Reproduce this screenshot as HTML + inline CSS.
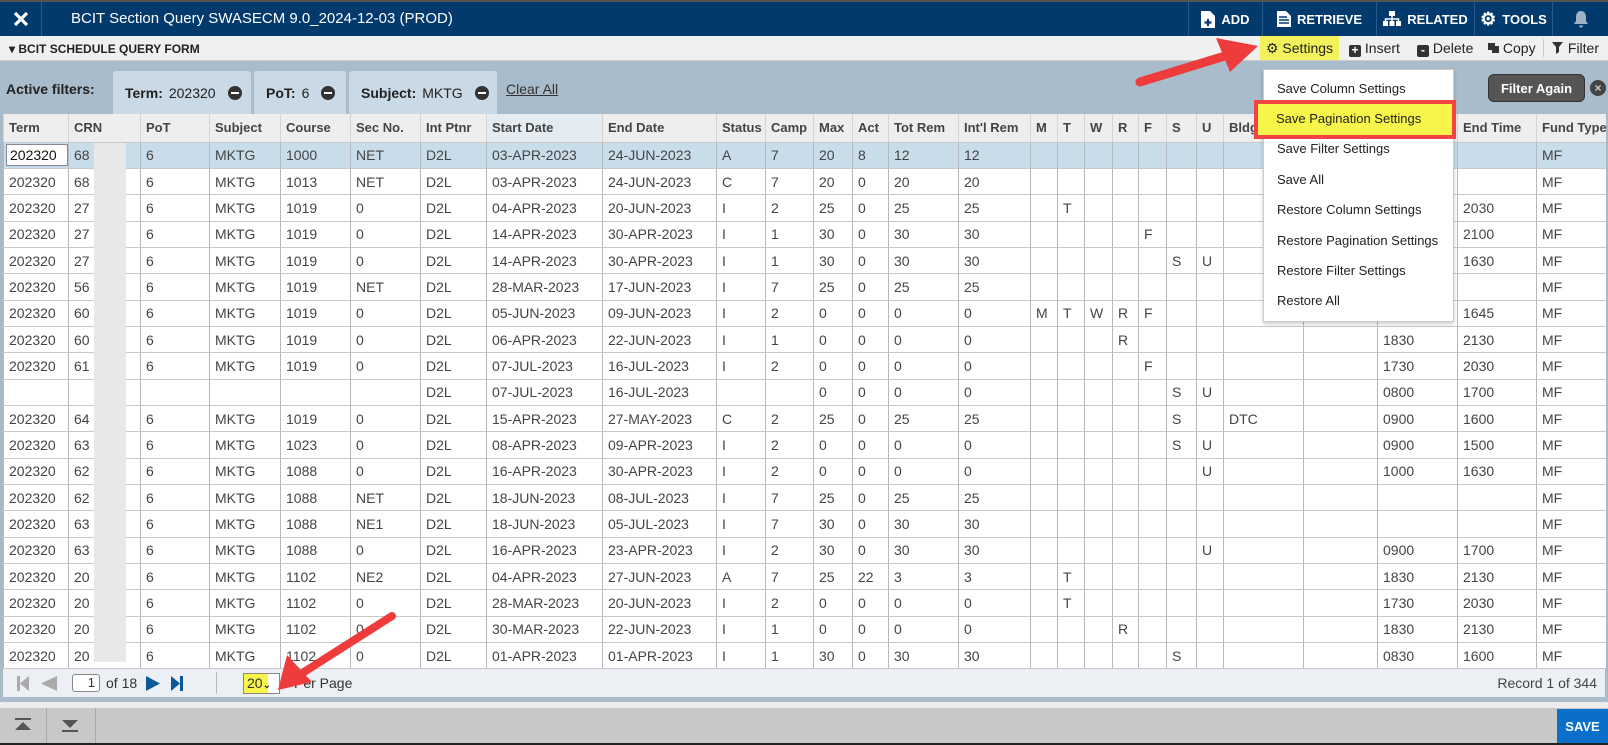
<!DOCTYPE html>
<html><head><meta charset="utf-8"><style>
*{box-sizing:border-box;margin:0;padding:0}
body{width:1608px;height:745px;overflow:hidden;background:#a9b9c6;font-family:"Liberation Sans",Arial,sans-serif;position:relative;color:#333}
.abs{position:absolute}
#top{left:0;top:0;width:1608px;height:36px;background:#023a6e;border-top:2px solid #555}
#top .t{color:#fff;font-size:15px}
.tb{position:absolute;top:0;height:34px;border-left:1px solid #2a5a8a;color:#fff;font-size:13px;font-weight:bold;display:flex;align-items:center;justify-content:center;gap:6px}
#sub{left:0;top:36px;width:1608px;height:25px;background:#f0f0f0;border-bottom:1px solid #ccc}
#filt{left:0;top:61px;width:1608px;height:53px;background:#a9bccb}
.chip{position:absolute;top:71px;height:43px;background:#c9d9e5;border-radius:3px 3px 0 0;font-size:14px;color:#222;display:flex;align-items:center;padding-left:12px}
.chip b{margin-right:6px}
.mn{display:inline-block;width:14px;height:14px;border-radius:50%;background:#333;position:relative;margin-left:12px}
.mn:after{content:"";position:absolute;left:3px;top:6px;width:8px;height:2px;background:#fff}
table{position:absolute;left:3px;top:114px;border-collapse:collapse;table-layout:fixed;width:1602px;font-size:14px}
td,th{height:26.35px;padding:0 0 0 5px;white-space:nowrap;overflow:hidden;text-align:left;border-left:1px dotted #bbb;border-bottom:1px solid #c8c8c8}
th{height:28px;background:#eeeeee;font-weight:bold;font-size:13px;color:#444;border-left:1px solid #d4d4d4}
tbody tr{background:#fff}
tbody tr.sel{background:#c9dcea}
td{color:#444}
#pag{left:3px;top:669px;width:1602px;height:28px;background:#eceff3;font-size:14px}
#bot{left:0;top:708px;width:1608px;height:35px;background:#c8c8c8}
#dd{left:1263px;top:69px;width:191px;height:253px;background:#fff;border:1px solid #ccc;box-shadow:0 2px 4px rgba(0,0,0,.2);font-size:13px;color:#222}
#dd div{position:absolute;left:13px}
.tl{position:absolute;top:4px;font-size:14px;color:#222}
</style></head><body>

<div id="top" class="abs">
 <div class="abs" style="left:0;top:0;width:42px;height:34px;border-right:1px solid #2a5a8a;display:flex;align-items:center;justify-content:center"><svg width="16" height="16" viewBox="0 0 16 16"><path d="M2 2L14 14M14 2L2 14" stroke="#fff" stroke-width="3.2"/></svg></div>
 <div class="abs t" style="left:71px;top:8px">BCIT Section Query SWASECM 9.0_2024-12-03 (PROD)</div>
 <div class="tb" style="left:1188px;width:74px"><svg width="14" height="17" viewBox="0 0 14 17"><path d="M0 0H9L14 5V17H0Z" fill="#fff"/><path d="M7 8V15M3.5 11.5H10.5" stroke="#023a6e" stroke-width="2.2"/></svg>ADD</div>
 <div class="tb" style="left:1262px;width:114px"><svg width="14" height="16" viewBox="0 0 14 16"><path d="M0 0H9L14 5V16H0Z" fill="#fff"/><path d="M2 6H10M2 9H12M2 12H12" stroke="#023a6e" stroke-width="1.5"/></svg>RETRIEVE</div>
 <div class="tb" style="left:1376px;width:98px"><svg width="18" height="16" viewBox="0 0 18 16"><rect x="6" y="0" width="6" height="5" fill="#fff"/><rect x="0" y="10" width="5" height="5" fill="#fff"/><rect x="6.5" y="10" width="5" height="5" fill="#fff"/><rect x="13" y="10" width="5" height="5" fill="#fff"/><path d="M9 5V8M2.5 10V8H15.5V10M9 8V10" stroke="#fff" stroke-width="1.5" fill="none"/></svg>RELATED</div>
 <div class="tb" style="left:1474px;width:78px"><span style="font-size:18px">⚙</span>TOOLS</div>
 <div class="tb" style="left:1552px;width:56px"><svg width="16" height="18" viewBox="0 0 16 18"><path d="M8 1C4.5 1 3 4 3 7V11L1 14H15L13 11V7C13 4 11.5 1 8 1Z M6 15.5A2 2 0 0 0 10 15.5Z" fill="#9fb2c6"/></svg></div>
</div>

<div id="sub" class="abs">
 <div class="abs" style="left:9px;top:6px;font-size:12px;font-weight:bold;color:#222">▾ BCIT SCHEDULE QUERY FORM</div>
 <div class="abs" style="left:1260px;top:0;width:79px;height:24px;background:#f4f25a;font-size:14px;color:#222;display:flex;align-items:center;justify-content:center;gap:4px">⚙ Settings</div>
 <div class="tl" style="left:1349px"><span style="display:inline-block;width:12px;height:12px;background:#333;border-radius:2px;color:#fff;font-size:12px;line-height:11px;text-align:center;font-weight:bold;vertical-align:-1px">+</span> Insert</div>
 <div class="tl" style="left:1417px"><span style="display:inline-block;width:12px;height:12px;background:#333;border-radius:2px;color:#fff;font-size:12px;line-height:10px;text-align:center;font-weight:bold;vertical-align:-1px">-</span> Delete</div>
 <div class="tl" style="left:1488px"><span style="display:inline-block;width:11px;height:10px;background:linear-gradient(#333,#333) 0 0/7px 7px no-repeat,linear-gradient(#333,#333) 4px 3px/7px 7px no-repeat"></span> Copy</div>
 <div class="abs" style="left:1543px;top:3px;width:1px;height:18px;background:#ccc"></div>
 <div class="tl" style="left:1552px"><svg width="12" height="12" viewBox="0 0 12 12" style="vertical-align:-1px"><path d="M0 0H11L7 5V10L4 12V5Z" fill="#333"/></svg> Filter</div>
</div>

<div id="filt" class="abs"></div>
<div class="abs" style="left:6px;top:81px;font-size:14px;font-weight:bold;color:#222">Active filters:</div>
<div class="chip" style="left:113px;width:138px"><b>Term:</b>202320<span class="mn"></span></div>
<div class="chip" style="left:254px;width:92px"><b>PoT:</b>6<span class="mn"></span></div>
<div class="chip" style="left:349px;width:148px"><b>Subject:</b>MKTG<span class="mn"></span></div>
<div class="abs" style="left:506px;top:81px;font-size:14px;color:#333;text-decoration:underline">Clear All</div>
<div class="abs" style="left:1488px;top:74px;width:97px;height:28px;background:#555;border:1px solid #333;border-radius:6px;color:#fff;font-size:13px;font-weight:bold;display:flex;align-items:center;justify-content:center">Filter Again</div>
<div class="abs" style="left:1590px;top:80px;width:16px;height:16px;border-radius:50%;background:#444;color:#ccc;font-size:12px;font-weight:bold;line-height:16px;text-align:center">×</div>

<table>
<colgroup><col style="width:65px"><col style="width:72px"><col style="width:69px"><col style="width:71px"><col style="width:70px"><col style="width:70px"><col style="width:66px"><col style="width:116px"><col style="width:114px"><col style="width:49px"><col style="width:48px"><col style="width:39px"><col style="width:36px"><col style="width:70px"><col style="width:72px"><col style="width:27px"><col style="width:27px"><col style="width:28px"><col style="width:26px"><col style="width:28px"><col style="width:30px"><col style="width:27px"><col style="width:80px"><col style="width:74px"><col style="width:80px"><col style="width:79px"><col style="width:69px"></colgroup>
<thead><tr><th>Term</th><th>CRN</th><th>PoT</th><th>Subject</th><th>Course</th><th>Sec No.</th><th>Int Ptnr</th><th style="background:#e4ecf2">Start Date</th><th>End Date</th><th>Status</th><th>Camp</th><th>Max</th><th>Act</th><th>Tot Rem</th><th>Int'l Rem</th><th>M</th><th>T</th><th>W</th><th>R</th><th>F</th><th>S</th><th>U</th><th>Bldg</th><th>Room</th><th>Start Time</th><th>End Time</th><th>Fund Type</th></tr></thead>
<tbody>
<tr class="sel"><td style="padding:0 0 0 2px"><span style="display:block;background:#fff;border:1px solid #889;height:22px;line-height:20px;padding-left:3px;color:#111;width:62px">202320</span></td><td>68</td><td>6</td><td>MKTG</td><td>1000</td><td>NET</td><td>D2L</td><td>03-APR-2023</td><td>24-JUN-2023</td><td>A</td><td>7</td><td>20</td><td>8</td><td>12</td><td>12</td><td></td><td></td><td></td><td></td><td></td><td></td><td></td><td></td><td></td><td></td><td></td><td>MF</td></tr>
<tr><td>202320</td><td>68</td><td>6</td><td>MKTG</td><td>1013</td><td>NET</td><td>D2L</td><td>03-APR-2023</td><td>24-JUN-2023</td><td>C</td><td>7</td><td>20</td><td>0</td><td>20</td><td>20</td><td></td><td></td><td></td><td></td><td></td><td></td><td></td><td></td><td></td><td></td><td></td><td>MF</td></tr>
<tr><td>202320</td><td>27</td><td>6</td><td>MKTG</td><td>1019</td><td>0</td><td>D2L</td><td>04-APR-2023</td><td>20-JUN-2023</td><td>I</td><td>2</td><td>25</td><td>0</td><td>25</td><td>25</td><td></td><td>T</td><td></td><td></td><td></td><td></td><td></td><td></td><td></td><td></td><td>2030</td><td>MF</td></tr>
<tr><td>202320</td><td>27</td><td>6</td><td>MKTG</td><td>1019</td><td>0</td><td>D2L</td><td>14-APR-2023</td><td>30-APR-2023</td><td>I</td><td>1</td><td>30</td><td>0</td><td>30</td><td>30</td><td></td><td></td><td></td><td></td><td>F</td><td></td><td></td><td></td><td></td><td></td><td>2100</td><td>MF</td></tr>
<tr><td>202320</td><td>27</td><td>6</td><td>MKTG</td><td>1019</td><td>0</td><td>D2L</td><td>14-APR-2023</td><td>30-APR-2023</td><td>I</td><td>1</td><td>30</td><td>0</td><td>30</td><td>30</td><td></td><td></td><td></td><td></td><td></td><td>S</td><td>U</td><td></td><td></td><td></td><td>1630</td><td>MF</td></tr>
<tr><td>202320</td><td>56</td><td>6</td><td>MKTG</td><td>1019</td><td>NET</td><td>D2L</td><td>28-MAR-2023</td><td>17-JUN-2023</td><td>I</td><td>7</td><td>25</td><td>0</td><td>25</td><td>25</td><td></td><td></td><td></td><td></td><td></td><td></td><td></td><td></td><td></td><td></td><td></td><td>MF</td></tr>
<tr><td>202320</td><td>60</td><td>6</td><td>MKTG</td><td>1019</td><td>0</td><td>D2L</td><td>05-JUN-2023</td><td>09-JUN-2023</td><td>I</td><td>2</td><td>0</td><td>0</td><td>0</td><td>0</td><td>M</td><td>T</td><td>W</td><td>R</td><td>F</td><td></td><td></td><td></td><td></td><td></td><td>1645</td><td>MF</td></tr>
<tr><td>202320</td><td>60</td><td>6</td><td>MKTG</td><td>1019</td><td>0</td><td>D2L</td><td>06-APR-2023</td><td>22-JUN-2023</td><td>I</td><td>1</td><td>0</td><td>0</td><td>0</td><td>0</td><td></td><td></td><td></td><td>R</td><td></td><td></td><td></td><td></td><td></td><td>1830</td><td>2130</td><td>MF</td></tr>
<tr><td>202320</td><td>61</td><td>6</td><td>MKTG</td><td>1019</td><td>0</td><td>D2L</td><td>07-JUL-2023</td><td>16-JUL-2023</td><td>I</td><td>2</td><td>0</td><td>0</td><td>0</td><td>0</td><td></td><td></td><td></td><td></td><td>F</td><td></td><td></td><td></td><td></td><td>1730</td><td>2030</td><td>MF</td></tr>
<tr><td></td><td></td><td></td><td></td><td></td><td></td><td>D2L</td><td>07-JUL-2023</td><td>16-JUL-2023</td><td></td><td></td><td>0</td><td>0</td><td>0</td><td>0</td><td></td><td></td><td></td><td></td><td></td><td>S</td><td>U</td><td></td><td></td><td>0800</td><td>1700</td><td>MF</td></tr>
<tr><td>202320</td><td>64</td><td>6</td><td>MKTG</td><td>1019</td><td>0</td><td>D2L</td><td>15-APR-2023</td><td>27-MAY-2023</td><td>C</td><td>2</td><td>25</td><td>0</td><td>25</td><td>25</td><td></td><td></td><td></td><td></td><td></td><td>S</td><td></td><td>DTC</td><td></td><td>0900</td><td>1600</td><td>MF</td></tr>
<tr><td>202320</td><td>63</td><td>6</td><td>MKTG</td><td>1023</td><td>0</td><td>D2L</td><td>08-APR-2023</td><td>09-APR-2023</td><td>I</td><td>2</td><td>0</td><td>0</td><td>0</td><td>0</td><td></td><td></td><td></td><td></td><td></td><td>S</td><td>U</td><td></td><td></td><td>0900</td><td>1500</td><td>MF</td></tr>
<tr><td>202320</td><td>62</td><td>6</td><td>MKTG</td><td>1088</td><td>0</td><td>D2L</td><td>16-APR-2023</td><td>30-APR-2023</td><td>I</td><td>2</td><td>0</td><td>0</td><td>0</td><td>0</td><td></td><td></td><td></td><td></td><td></td><td></td><td>U</td><td></td><td></td><td>1000</td><td>1630</td><td>MF</td></tr>
<tr><td>202320</td><td>62</td><td>6</td><td>MKTG</td><td>1088</td><td>NET</td><td>D2L</td><td>18-JUN-2023</td><td>08-JUL-2023</td><td>I</td><td>7</td><td>25</td><td>0</td><td>25</td><td>25</td><td></td><td></td><td></td><td></td><td></td><td></td><td></td><td></td><td></td><td></td><td></td><td>MF</td></tr>
<tr><td>202320</td><td>63</td><td>6</td><td>MKTG</td><td>1088</td><td>NE1</td><td>D2L</td><td>18-JUN-2023</td><td>05-JUL-2023</td><td>I</td><td>7</td><td>30</td><td>0</td><td>30</td><td>30</td><td></td><td></td><td></td><td></td><td></td><td></td><td></td><td></td><td></td><td></td><td></td><td>MF</td></tr>
<tr><td>202320</td><td>63</td><td>6</td><td>MKTG</td><td>1088</td><td>0</td><td>D2L</td><td>16-APR-2023</td><td>23-APR-2023</td><td>I</td><td>2</td><td>30</td><td>0</td><td>30</td><td>30</td><td></td><td></td><td></td><td></td><td></td><td></td><td>U</td><td></td><td></td><td>0900</td><td>1700</td><td>MF</td></tr>
<tr><td>202320</td><td>20</td><td>6</td><td>MKTG</td><td>1102</td><td>NE2</td><td>D2L</td><td>04-APR-2023</td><td>27-JUN-2023</td><td>A</td><td>7</td><td>25</td><td>22</td><td>3</td><td>3</td><td></td><td>T</td><td></td><td></td><td></td><td></td><td></td><td></td><td></td><td>1830</td><td>2130</td><td>MF</td></tr>
<tr><td>202320</td><td>20</td><td>6</td><td>MKTG</td><td>1102</td><td>0</td><td>D2L</td><td>28-MAR-2023</td><td>20-JUN-2023</td><td>I</td><td>2</td><td>0</td><td>0</td><td>0</td><td>0</td><td></td><td>T</td><td></td><td></td><td></td><td></td><td></td><td></td><td></td><td>1730</td><td>2030</td><td>MF</td></tr>
<tr><td>202320</td><td>20</td><td>6</td><td>MKTG</td><td>1102</td><td>0</td><td>D2L</td><td>30-MAR-2023</td><td>22-JUN-2023</td><td>I</td><td>1</td><td>0</td><td>0</td><td>0</td><td>0</td><td></td><td></td><td></td><td>R</td><td></td><td></td><td></td><td></td><td></td><td>1830</td><td>2130</td><td>MF</td></tr>
<tr><td>202320</td><td>20</td><td>6</td><td>MKTG</td><td>1102</td><td>0</td><td>D2L</td><td>01-APR-2023</td><td>01-APR-2023</td><td>I</td><td>1</td><td>30</td><td>0</td><td>30</td><td>30</td><td></td><td></td><td></td><td></td><td></td><td>S</td><td></td><td></td><td></td><td>0830</td><td>1600</td><td>MF</td></tr>
</tbody></table>

<div class="abs" style="left:94px;top:143px;width:32px;height:519px;background:#e8e8e8"></div>

<div id="pag" class="abs">
 <svg class="abs" style="left:14px;top:7px" width="12" height="15" viewBox="0 0 12 15"><rect x="0" y="0" width="3" height="15" fill="#aaa"/><path d="M12 0V15L3 7.5Z" fill="#aaa"/></svg>
 <svg class="abs" style="left:38px;top:7px" width="16" height="15" viewBox="0 0 16 15"><path d="M16 0V15L0 7.5Z" fill="#aaa"/></svg>
 <div class="abs" style="left:69px;top:5px;width:28px;height:18px;border:1px solid #888;border-radius:3px;background:#fff;text-align:right;padding-right:4px;font-size:13px;line-height:16px">1</div>
 <div class="abs" style="left:103px;top:6px;font-size:14px">of 18</div>
 <svg class="abs" style="left:143px;top:7px" width="14" height="15" viewBox="0 0 14 15"><path d="M0 0V15L14 7.5Z" fill="#0a5a98"/></svg>
 <svg class="abs" style="left:168px;top:7px" width="12" height="15" viewBox="0 0 12 15"><path d="M0 0V15L9 7.5Z" fill="#0a5a98"/><rect x="9" y="0" width="3" height="15" fill="#0a5a98"/></svg>
 <div class="abs" style="left:213px;top:3px;width:1px;height:22px;background:#bbb"></div>
 <div class="abs" style="left:240px;top:4px;width:37px;height:21px;border:1px solid #888;background:linear-gradient(90deg,#f8f54a 24px,#fff 24px);font-size:14px;line-height:19px;padding-left:3px">20<span style="font-size:10px;font-weight:bold">⌄</span></div>
 <div class="abs" style="left:291px;top:6px;font-size:14px">Per Page</div>
 <div class="abs" style="right:8px;top:6px;font-size:14px;color:#444">Record 1 of 344</div>
</div>
<div class="abs" style="left:0;top:697px;width:1608px;height:5px;background:#a9bccb"></div>
<div class="abs" style="left:0;top:702px;width:1608px;height:6px;background:#ececec"></div>
<div id="bot" class="abs">
 <svg class="abs" style="left:15px;top:10px" width="16" height="14" viewBox="0 0 16 14"><rect x="0" y="0" width="16" height="2" fill="#555"/><path d="M8 4L16 12H0Z" fill="#555"/></svg>
 <div class="abs" style="left:46px;top:0;width:1px;height:35px;background:#aaa"></div>
 <svg class="abs" style="left:62px;top:10px" width="16" height="14" viewBox="0 0 16 14"><path d="M0 2H16L8 10Z" fill="#555"/><rect x="0" y="12" width="16" height="2" fill="#555"/></svg>
 <div class="abs" style="left:95px;top:0;width:1px;height:35px;background:#aaa"></div>
 <div class="abs" style="left:1557px;top:1px;width:51px;height:34px;background:#0a6fc9;color:#fff;font-size:13px;font-weight:bold;display:flex;align-items:center;justify-content:center">SAVE</div>
</div>
<div class="abs" style="left:0;top:743px;width:1608px;height:2px;background:#222"></div>

<div id="dd" class="abs">
 <div style="top:11px">Save Column Settings</div>
 <div style="top:41px">Save Pagination Settings</div>
 <div style="top:71px">Save Filter Settings</div>
 <div style="top:102px">Save All</div>
 <div style="top:132px">Restore Column Settings</div>
 <div style="top:163px">Restore Pagination Settings</div>
 <div style="top:193px">Restore Filter Settings</div>
 <div style="top:223px">Restore All</div>
</div>
<div class="abs" style="left:1254px;top:100px;width:202px;height:39px;border:4px solid #f24444;background:#f8f54a;font-size:13px;color:#222;padding:7px 0 0 18px">Save Pagination Settings</div>

<svg class="abs" style="left:0;top:0" width="1608" height="745">
 <path d="M1140 82L1225 56" stroke="#ee3b3b" stroke-width="9" stroke-linecap="round"/>
 <path d="M1258 46L1216 38L1230 72Z" fill="#ee3b3b"/>
 <path d="M392 616L304 672" stroke="#ee3b3b" stroke-width="8" stroke-linecap="round"/>
 <path d="M278 690L287 655L312 682Z" fill="#ee3b3b"/>
</svg>
</body></html>
